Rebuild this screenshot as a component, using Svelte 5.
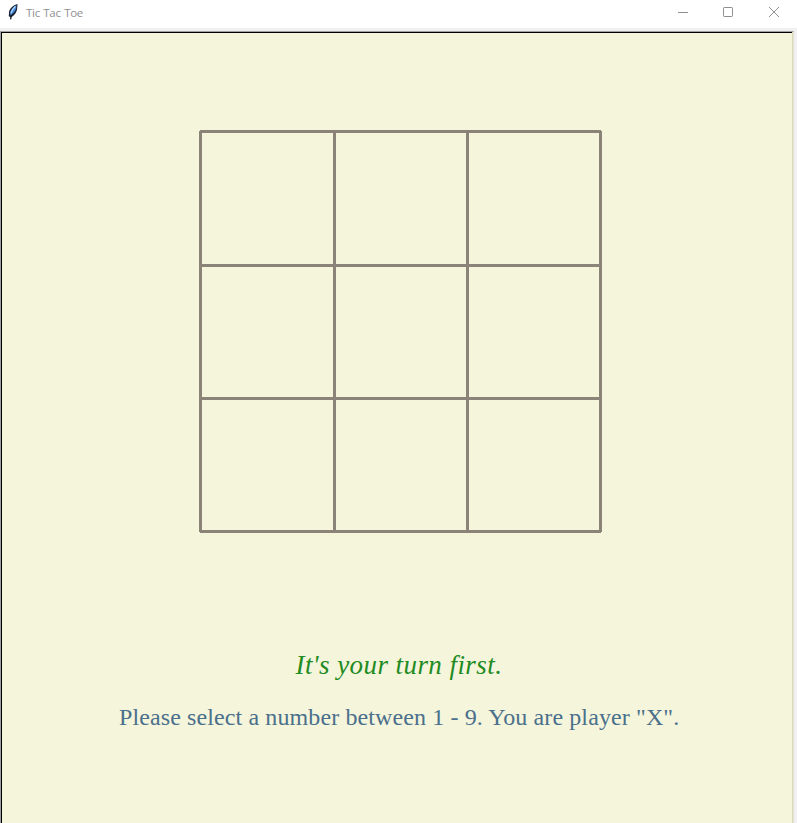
<script>
  const title = 'Tic Tac Toe';
  const lines = [
    'M200.5 131V532', 'M334.5 131V532', 'M467.5 131V532', 'M600.5 131V532',
    'M200 131.5H601', 'M200 265.5H601', 'M200 398.5H601', 'M200 531.5H601'
  ];
</script>

<div class="window">
  <header>
    <svg class="feather" width="12" height="18" viewBox="0 0 12 18" aria-hidden="true">
      <path d="M10.5 1C7 1.8 3 4.8 2.1 8.5L1.8 13.3L4 14.4C8 12.2 10.1 8.6 10.2 5.2Z" fill="#17202c" />
      <path d="M9.3 2.3C6.3 3.7 4 6.3 3.2 9.3L3.3 12.4C6.8 10.5 8.9 7.5 9.3 4.7Z" fill="#3f82d4" />
      <path d="M8.4 3.3C6.6 5 5.1 7.6 3.9 10.3" stroke="#b9dbff" stroke-width="1.2" fill="none" />
      <path d="M4.3 12L3.6 16.3" stroke="#17202c" stroke-width="1.3" />
    </svg>
    <h1>{title}</h1>
    <div class="controls">
      <svg width="46" height="24" viewBox="0 0 46 24"><path d="M18 12.5H28" /></svg>
      <svg width="46" height="24" viewBox="0 0 46 24"><rect x="18.5" y="7.5" width="9" height="9" rx=".7" /></svg>
      <svg width="46" height="24" viewBox="0 0 46 24"><path d="M18 7L28 17M28 7L18 17" /></svg>
    </div>
  </header>
  <main>
    <svg class="board" width="404" height="404" viewBox="199 130 404 404" role="img" aria-label="Board">
      {#each lines as d}<path {d} />{/each}
    </svg>
    <p class="turn">It's your turn first.</p>
    <p class="prompt">Please select a number between 1 - 9. You are player "X".</p>
  </main>
</div>

<style>
  :global(body) { overflow: hidden; }
  .window { width: 797px; height: 823px; box-sizing: border-box; background: #f0f0f0; overflow: hidden; }
  header { height: 28px; background: #fff; display: flex; align-items: flex-start; }
  .feather { margin: 3px 0 0 7px; flex: none; }
  h1 { margin: 5px 0 0 7px; font: 400 11.5px/16px "Open Sans", "Noto Sans", sans-serif; letter-spacing: -.3px; word-spacing: .8px; color: #909090; white-space: nowrap; }
  .controls { display: flex; margin-left: auto; }
  .controls svg { fill: none; stroke: #8f8f8f; stroke-width: 1; }
  .controls svg:first-child { margin-right: -1px; padding-left: 1px; }
  main {
    box-sizing: border-box; width: 794px; height: 800px; margin-top: 3px;
    background: #f5f5dc; border: 1px solid #a0a0a0; border-right-color: #e3e3d0;
    box-shadow: inset -1px 0 #d9d9c0, inset 1px 1px #000;
    display: flex; flex-direction: column; align-items: flex-start;
  }
  .board { margin: 98px 0 0 198px; flex: none; }
  .board path { fill: none; stroke: #8b8378; stroke-width: 3; }
  p { margin: 0; white-space: nowrap; font-family: "Liberation Serif", serif; }
  .turn { margin: 114px 0 0 294.5px; font-size: 27px; font-style: italic; line-height: 34px; letter-spacing: .43px; color: #228b22; }
  .prompt { margin: 20px 0 0 118px; font-size: 24px; line-height: 30px; letter-spacing: .11px; color: #4a708b; }
</style>
